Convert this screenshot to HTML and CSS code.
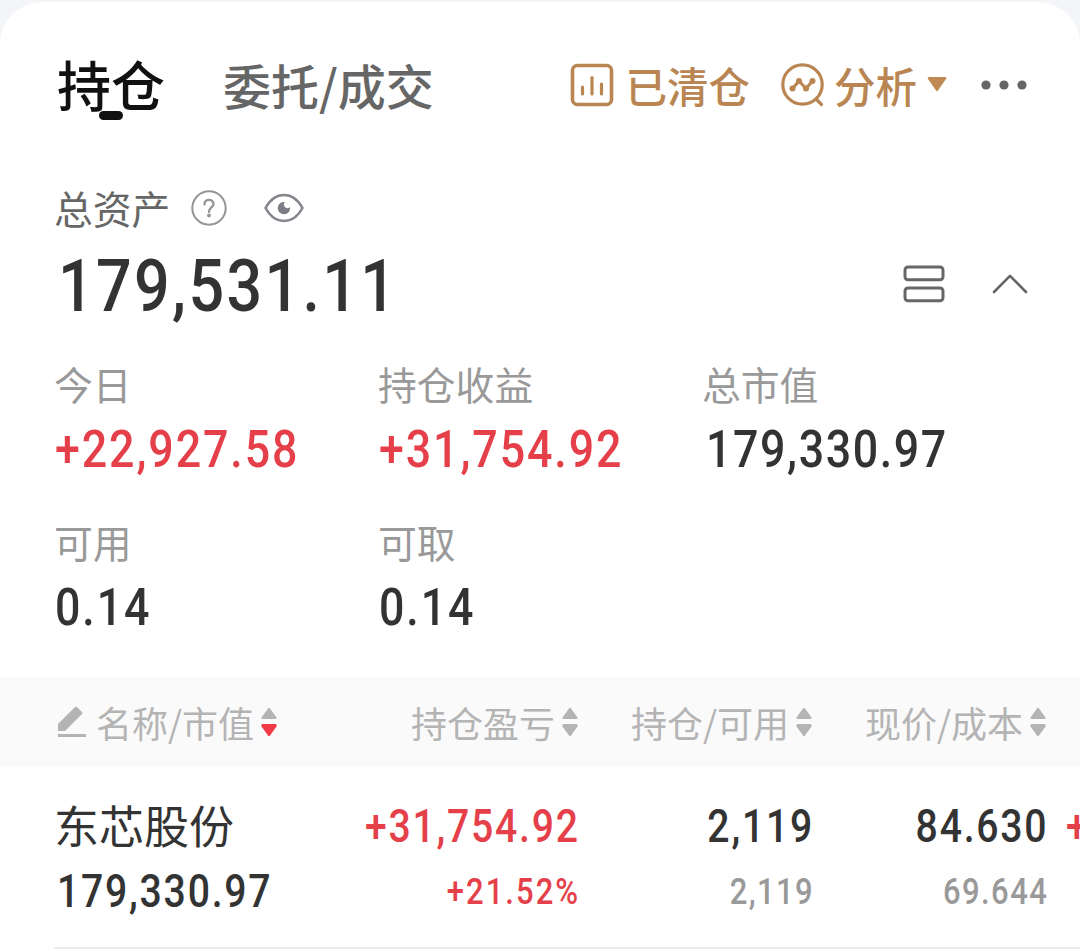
FILE: index.html
```html
<!DOCTYPE html>
<html lang="zh-CN">
<head>
<meta charset="utf-8">
<title>持仓</title>
<link rel="stylesheet" href="styles.css">
</head>
<body>
<main class="card">
  <header class="header">
    <nav class="tabs">
      <span class="tab tab-active">持仓</span>
      <span class="tab">委托/成交</span>
    </nav>
    <div class="tools">
      <svg class="icon-bars" width="44" height="44" viewBox="0 0 44 44" fill="none" stroke="#b98653" stroke-linecap="round">
        <rect x="2.5" y="2.5" width="39" height="39" rx="5" stroke-width="3.6"/>
        <path d="M12.500 24V31M22 14.500V31M31.500 21V31" stroke-width="3.2"/>
      </svg>
      <span class="tool-text">已清仓</span>
      <svg class="icon-analysis" width="44" height="44" viewBox="0 0 44 44" fill="none" stroke="#b98653" stroke-width="3.2" stroke-linecap="round" stroke-linejoin="round">
        <circle cx="21.500" cy="21.500" r="19.700"/>
        <path d="M35.500 36.500L40.500 41.500M11.500 25.500L18 18L25 25.500L31.500 18"/>
        <g fill="#b98653" stroke="none"><circle cx="11.500" cy="25.500" r="3"/><circle cx="18" cy="18" r="3"/><circle cx="25" cy="25.500" r="3"/><circle cx="31.500" cy="18" r="3"/></g>
      </svg>
      <span class="tool-text">分析</span>
      <svg class="icon-caret" width="20" height="16" viewBox="0 0 20 16"><path d="M2 1H18Q20 1 19 3L11 14.500Q10 16 9 14.500L1 3Q0 1 2 1Z" fill="#c08a55"/></svg>
      <svg class="icon-more" width="46" height="10" viewBox="0 0 46 10" fill="#666"><circle cx="5" cy="5" r="4.600"/><circle cx="23" cy="5" r="4.600"/><circle cx="41" cy="5" r="4.600"/></svg>
    </div>
  </header>

  <section class="total">
    <div class="total-label">
      <span class="label label-dark">总资产</span>
      <svg class="icon-help" width="36" height="36" viewBox="0 0 36 36" fill="none" stroke="#969696" stroke-width="2">
        <circle cx="18" cy="18" r="16.700"/>
        <path d="M13.500 14.200C13.500 8.500 22.500 8.500 22.500 14C22.500 17.500 18 17.500 18 21.800" stroke-width="2.400" stroke-linecap="round"/>
        <circle cx="18" cy="25.500" r="1.900" fill="#969696" stroke="none"/>
      </svg>
      <svg class="icon-eye" width="40" height="30" viewBox="0 0 40 30">
        <path d="M1.500 15C11 -2.200 29 -2.200 38.500 15C29 32.200 11 32.200 1.500 15Z" fill="none" stroke="#85858b" stroke-width="2.500" stroke-linejoin="round"/>
        <path d="M21 9A6.200 6.200 0 1 0 26 14A3.500 3.500 0 0 1 21 9Z" fill="#7d7d88"/>
      </svg>
    </div>
    <div class="total-row">
      <span class="num num-xl">179,531.11</span>
      <div class="total-actions">
        <svg width="42" height="38" viewBox="0 0 42 38" fill="none" stroke="#666" stroke-width="3"><rect x="2" y="2" width="38" height="12.800" rx="3"/><rect x="2" y="23" width="38" height="12.800" rx="3"/></svg>
        <svg width="36" height="22" viewBox="0 0 36 22" fill="none" stroke="#666" stroke-width="2.600" stroke-linecap="round" stroke-linejoin="round"><path d="M2 19L18 2.800L34 19"/></svg>
      </div>
    </div>
  </section>

  <section class="metrics">
    <div class="metric"><span class="label">今日</span><span class="num num-l red">+22,927.58</span></div>
    <div class="metric"><span class="label">持仓收益</span><span class="num num-l red">+31,754.92</span></div>
    <div class="metric"><span class="label">总市值</span><span class="num num-l lead-one">179,330.97</span></div>
    <div class="metric"><span class="label">可用</span><span class="num num-l">0.14</span></div>
    <div class="metric"><span class="label">可取</span><span class="num num-l">0.14</span></div>
  </section>

  <div class="grid thead">
    <div class="th th-first">
      <svg class="icon-edit" width="30" height="32" viewBox="0 0 30 32" fill="#b4b4b4"><path d="M1 25V18L17.500 1.500Q19 0 20.500 1.500L25 6Q26 7 25 8L8 25Z"/><rect x="1" y="28" width="28" height="3"/></svg>
      <span class="th-text">名称/市值</span>
      <svg class="sort" width="16" height="30" viewBox="0 0 16 30"><path d="M7 1.500Q8 .2 9 1.500L15.500 10.500Q16 12 14.500 12H1.500Q0 12 .5 10.500Z" fill="#b4b4b4"/><path d="M7 28.500Q8 29.800 9 28.500L15.500 19.500Q16 18 15 17H1Q0 18 .5 19.500Z" fill="#f03a46"/></svg>
    </div>
    <div class="th">
      <span class="th-text">持仓盈亏</span>
      <svg class="sort" width="16" height="30" viewBox="0 0 16 30" fill="#b4b4b4"><path d="M7 1.500Q8 .2 9 1.500L15.500 10.500Q16 12 14.500 12H1.500Q0 12 .5 10.500Z"/><path d="M7 28.500Q8 29.800 9 28.500L15.500 19.500Q16 18 15 17H1Q0 18 .5 19.500Z"/></svg>
    </div>
    <div class="th">
      <span class="th-text">持仓/可用</span>
      <svg class="sort" width="16" height="30" viewBox="0 0 16 30" fill="#b4b4b4"><path d="M7 1.500Q8 .2 9 1.500L15.500 10.500Q16 12 14.500 12H1.500Q0 12 .5 10.500Z"/><path d="M7 28.500Q8 29.800 9 28.500L15.500 19.500Q16 18 15 17H1Q0 18 .5 19.500Z"/></svg>
    </div>
    <div class="th">
      <span class="th-text">现价/成本</span>
      <svg class="sort" width="16" height="30" viewBox="0 0 16 30" fill="#b4b4b4"><path d="M7 1.500Q8 .2 9 1.500L15.500 10.500Q16 12 14.500 12H1.500Q0 12 .5 10.500Z"/><path d="M7 28.500Q8 29.800 9 28.500L15.500 19.500Q16 18 15 17H1Q0 18 .5 19.500Z"/></svg>
    </div>
  </div>

  <div class="grid row">
    <div class="cell cell-first"><span class="name">东芯股份</span><span class="num num-m lead-one">179,330.97</span></div>
    <div class="cell"><span class="num num-m red">+31,754.92</span><span class="num num-s num-rate red">+21.52%</span></div>
    <div class="cell"><span class="num num-m">2,119</span><span class="num num-s gray">2,119</span></div>
    <div class="cell"><span class="num num-m">84.630</span><span class="num num-s gray">69.644</span></div>
    <div class="cell cell-next"><span class="num num-m red">+</span></div>
  </div>
  <hr class="divider">
</main>
</body>
</html>
```
FILE: styles.css
```css
* { box-sizing: border-box; }
body {
  margin: 0;
  padding-top: 2px;
  height: 951px;
  overflow: hidden;
  background: #f4f5f8;
  font-family: "Noto Sans CJK SC", sans-serif;
  color: #333;
}
svg { display: block; flex: none; }
.card {
  height: 949px;
  background: #fff;
  border-radius: 42px 42px 0 0;
  overflow: hidden;
}
.header {
  height: 167px;
  padding: 0 53px 0 57px;
  display: flex;
  align-items: center;
  justify-content: space-between;
}
.tabs { display: flex; align-items: center; gap: 58px; }
.tab {
  font-size: 48px;
  line-height: 60px;
  font-weight: 500;
  color: #666;
  margin-top: -3px;
}
.tab-active { position: relative; font-size: 54px; color: #111; }
.tab-active::after {
  content: "";
  position: absolute;
  left: 42px;
  top: 57px;
  width: 24px;
  height: 9px;
  border-radius: 5px;
  background: #111;
}
.tools { display: flex; align-items: center; margin-top: -1px; }
.tool-text {
  font-size: 41.5px;
  line-height: 50px;
  font-weight: 500;
  color: #b98653;
  margin-top: -1px;
}
.icon-bars { margin-right: 11px; }
.icon-analysis { margin: 0 9px 0 31px; }
.icon-caret { margin: 0 34px 3px 10px; }
.total { padding: 11px 52px 0 54px; }
.total-label { height: 56px; display: flex; align-items: center; }
.icon-help { margin: 0 37px 0 21px; }
.icon-help, .icon-eye { margin-top: -1px; }
.total-row { height: 98px; display: flex; align-items: center; justify-content: space-between; }
.total-actions { display: flex; align-items: center; gap: 47px; margin-top: -3px; }
.label {
  font-size: 38.8px;
  line-height: 46px;
  color: #999;
}
.label-dark { color: #666; margin-top: -3px; }
.num {
  display: inline-block;
  font-family: Roboto, sans-serif;
  font-weight: 500;
  letter-spacing: .0455em;
  white-space: nowrap;
  transform: scaleX(.86);
  transform-origin: left center;
}
.num-xl { font-size: 73px; line-height: 98px; padding-top: 2px; margin-left: 4px; letter-spacing: .037em; }
.num-l { font-size: 52px; line-height: 84px; padding-top: 2px; margin-left: 1px; letter-spacing: .043em; }
.num-m { font-size: 45.5px; line-height: 64px; }
.num-s { font-size: 36px; line-height: 64px; }
.num-l.lead-one { margin-left: 4px; letter-spacing: .036em; }
.cell .num-m.lead-one { margin-left: 3px; }
.cell .num-rate { letter-spacing: .067em; margin-right: -3px; }
.red { color: #e5404a; }
.gray { color: #999; }
.metrics {
  padding: 26px 0 27px 54px;
  display: grid;
  grid-template-columns: repeat(3, 324px);
  row-gap: 26px;
}
.metric { display: flex; flex-direction: column; align-items: flex-start; }
.grid {
  display: grid;
  grid-template-columns: 290px 234px 234px 234px 34px;
  padding-left: 54px;
}
.thead { height: 90px; background: #fafafa; align-items: center; }
.th { display: flex; align-items: center; justify-content: flex-end; }
.th-first { justify-content: flex-start; }
.th-text { font-size: 36px; line-height: 44px; color: #b4b4b4; white-space: nowrap; }
.icon-edit { margin: 0 9px 0 3px; }
.sort { margin-left: 7px; }
.row { height: 180px; padding-top: 28px; align-items: start; }
.cell { display: flex; flex-direction: column; align-items: flex-end; gap: 1px; }
.cell .num { transform-origin: right center; margin-right: -2px; }
.cell-first, .cell-next { align-items: flex-start; }
.cell-first .num, .cell-next .num { transform-origin: left center; }
.cell-next { padding-left: 20px; }
.name { font-size: 45px; line-height: 64px; margin: -2px 0 2px; }
.divider { height: 2px; margin: 0 0 0 54px; border: 0; background: #ececec; }
```
